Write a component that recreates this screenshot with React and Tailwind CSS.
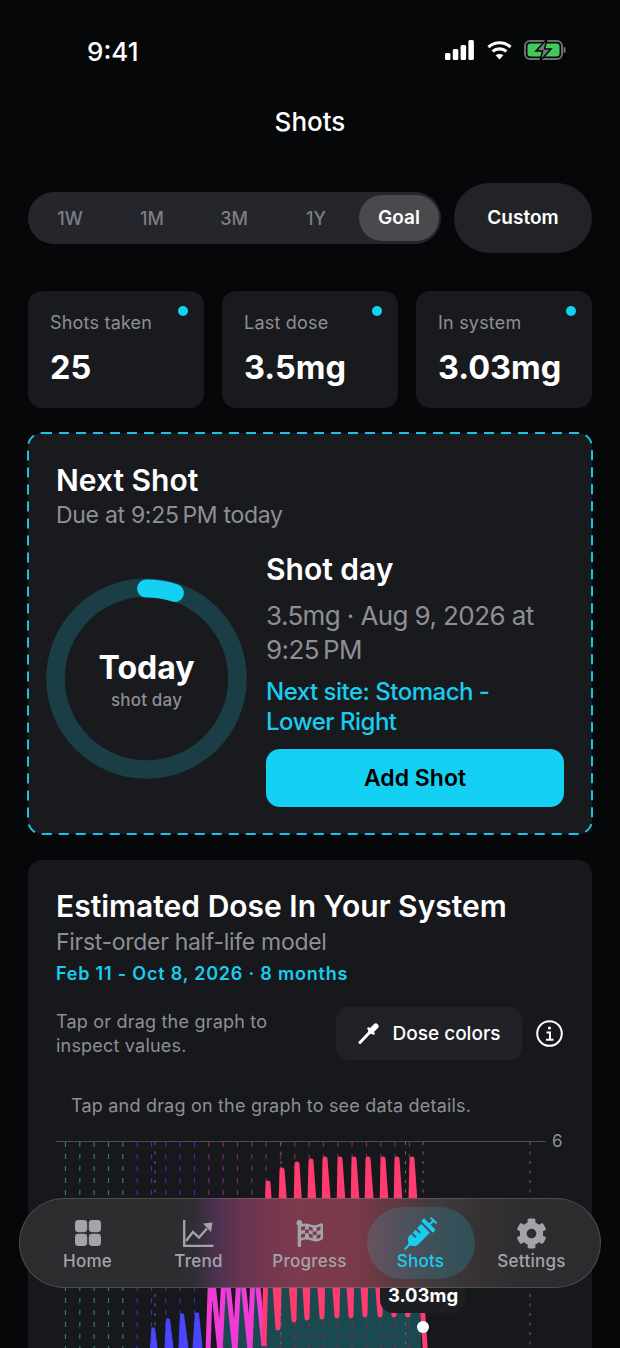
import React from "react";
import { FaSyringe, FaCog, FaFlagCheckered } from "react-icons/fa";

const ranges = ["1W", "1M", "3M", "1Y"];

const stats = [
  { label: "Shots taken", value: "25" },
  { label: "Last dose", value: "3.5mg" },
  { label: "In system", value: "3.03mg" },
];

// dashed guides, one per dose
const guideColor = (i) => {
  if (i < 5) return "#2f7a74";
  if (i < 10) return "#3a2fb0";
  if (i < 15) return "#7a2a78";
  return "#7e2a50";
};
const guides = Array.from({ length: 25 }, (_, i) => 65.5 + i * 14.33);
const monthLines = [155, 281, 405.5, 423, 530];

const blueSpikes = [
  "150.5,1348 152,1328 154.5,1328 157,1348",
  "165,1348 166.5,1319 169.5,1319 173,1348",
  "179,1348 180.5,1314 183.5,1314 188,1348",
  "193,1348 195.5,1313 198.5,1313 202,1348",
];
const magenta = "208,1352 211,1262 220,1352 225,1256 235,1352 240,1252 250,1350 254,1248 264,1346";
const pink =
  "264,1346 268,1183 278,1328 282,1170 294,1320 297,1164 307,1318 311,1161 322,1317 325,1159 337,1316 340,1159 351,1316 354,1159 365,1315 368,1159 380,1315 383,1159 394,1315 397,1159 408,1315 412,1159 426,1360";
const fill = `222,1352 225,1256 235,1352 240,1252 250,1350 254,1248 264,1346 ${pink.replace("264,1346 ", "").replace(" 426,1360", "")} 421,1330 421,1352`;

const DoseChart = () => (
  <svg className="block -mx-[28px] w-[564px] h-[223px]" viewBox="28 1125 564 223">
    <polygon points={fill} fill="#1a4a50" />
    <line x1="56" y1="1141.5" x2="546" y2="1141.5" stroke="#4c4d52" strokeWidth="1" />
    {guides.map((x, i) => (
      <line key={x} x1={x} y1="1142" x2={x} y2="1348" stroke={guideColor(i)} strokeWidth="1.2" strokeDasharray="5 7" />
    ))}
    {monthLines.map((x) => (
      <line key={x} x1={x} y1="1142" x2={x} y2="1348" stroke="#6a6b70" strokeWidth="1" strokeDasharray="3 6.5" />
    ))}
    {blueSpikes.map((p) => (
      <polygon key={p} points={p} fill="#4a45ff" stroke="#4a45ff" strokeWidth="1" strokeLinejoin="round" />
    ))}
    <polyline points={magenta} fill="none" stroke="#f03bd6" strokeWidth="5" strokeLinejoin="round" />
    <polyline points={pink} fill="none" stroke="#ff3b6f" strokeWidth="5" strokeLinejoin="round" />
    <rect x="380" y="1262" width="86" height="51" rx="13" fill="#1d1e22" />
    <text x="423" y="1302" textAnchor="middle" fill="#ffffff" fontSize="18.5" fontWeight="700" fontFamily="Inter, sans-serif">
      3.03mg
    </text>
    <circle cx="423" cy="1327" r="6" fill="#ffffff" />
    <text x="552" y="1147" fill="#8e8f94" fontSize="17" fontFamily="Inter, sans-serif">
      6
    </text>
  </svg>
);

const HomeIcon = () => (
  <svg width="26" height="26" viewBox="0 0 26 26" fill="currentColor">
    <rect x="0" y="0" width="12.2" height="12.2" rx="3.4" />
    <rect x="13.8" y="0" width="12.2" height="12.2" rx="3.4" />
    <rect x="0" y="13.8" width="12.2" height="12.2" rx="3.4" />
    <rect x="13.8" y="13.8" width="12.2" height="12.2" rx="3.4" />
  </svg>
);

const TrendIcon = () => (
  <svg width="31" height="27" viewBox="0 0 31 27" fill="none" stroke="currentColor" strokeWidth="2.3">
    <path d="M1.2 0v25.8H30.5" />
    <path d="M3 21l7-9 6 5.5 8-9" />
    <path d="M20 3.5 29.5 2.5 28 12z" fill="currentColor" stroke="none" />
  </svg>
);

const navItems = [
  { label: "Home", icon: <HomeIcon /> },
  { label: "Trend", icon: <TrendIcon /> },
  { label: "Progress", icon: <FaFlagCheckered size={27} /> },
  { label: "Shots", icon: <FaSyringe size={33} />, active: true },
  { label: "Settings", icon: <FaCog size={31} /> },
];

const App = () => {
  return (
    <div className="relative h-[1348px] w-[620px] overflow-hidden bg-[#060709] text-white font-['Inter',sans-serif]">
      {/* status bar */}
      <div className="h-[100px] pl-[87px] pr-[54px] flex items-center justify-between">
        <span className="pt-[3px] text-[26px] font-medium">9:41</span>
        <div className="flex items-center">
          <svg width="29" height="20" viewBox="0 0 29 20" fill="#fff">
            <rect x="0" y="13" width="5.500" height="7" rx="1.500" />
            <rect x="7.800" y="9" width="5.500" height="11" rx="1.500" />
            <rect x="15.600" y="5" width="5.500" height="15" rx="1.500" />
            <rect x="23.400" y="0" width="5.500" height="20" rx="1.500" />
          </svg>
          <svg className="ml-[13px]" width="25" height="20" viewBox="0 0 26 20" fill="none" stroke="#fff" strokeWidth="3.2">
            <path d="M1.500 7C8 1 18 1 24.500 7" />
            <path d="M5.800 11.500c4-3.600 10.400-3.600 14.400 0" />
            <path d="M13 20l-4-4.500c2.400-1.800 5.600-1.800 8 0z" fill="#fff" stroke="none" />
          </svg>
          <svg className="ml-[12px]" width="42" height="20" viewBox="0 0 42 20">
            <rect x="1" y="1" width="37" height="18" rx="5" fill="none" stroke="#6d6e6e" strokeWidth="2" />
            <rect x="3.500" y="3.500" width="32" height="13" rx="3" fill="#3ecb5c" />
            <rect x="39.500" y="7" width="2" height="6" rx="1" fill="#6d6e6e" />
            <path d="M23 -1 12 11h6.500L16 21 27 9h-6.500z" fill="#77787a" stroke="#060709" strokeWidth="1.500" />
          </svg>
        </div>
      </div>

      <div className="h-[44px] pb-[2px] flex items-center justify-center text-[26px] font-medium">Shots</div>

      {/* range selector */}
      <div className="mt-[39px] h-[70px] px-[28px] flex items-center gap-[13px]">
        <div className="w-[413px] h-[52px] rounded-full bg-[#25262b] flex items-center pl-[1px] pr-[2px]">
          {ranges.map((r) => (
            <div key={r} className="w-[82px] text-center text-[18px] font-medium text-[#7d7e84]">
              {r}
            </div>
          ))}
          <div className="ml-auto w-[80px] h-[46px] pt-[1px] rounded-full bg-[#4a494e] flex items-center justify-center text-[19px] font-semibold">
            Goal
          </div>
        </div>
        <div className="w-[138px] h-[70px] pt-[1px] rounded-[35px] bg-[#222327] flex items-center justify-center text-[19px] font-semibold">
          Custom
        </div>
      </div>

      {/* stats */}
      <div className="mt-[38px] px-[28px] grid grid-cols-3 gap-[18px]">
        {stats.map((s) => (
          <div key={s.label} className="relative h-[117px] rounded-[14px] bg-[#191a1e] pl-[22px] pt-[20px]">
            <span className="absolute right-[16px] top-[15px] w-[10px] h-[10px] rounded-full bg-[#14d1f3]" />
            <div className="text-[18px] leading-[24px] tracking-[0.2px] text-[#8e8f94]">{s.label}</div>
            <div className="mt-[11px] text-[32.500px] leading-[44px] font-bold">{s.value}</div>
          </div>
        ))}
      </div>

      {/* next shot */}
      <div className="relative mt-[25px] mx-[28px] h-[401px] rounded-[14px] bg-[#191a1e] px-[28px] pt-[29px]">
        <svg className="absolute inset-0 w-full h-full overflow-visible" fill="none">
          <rect x="0" y="0" width="564" height="401" rx="14" stroke="#1cc3e0" strokeWidth="2" strokeDasharray="10 7" />
        </svg>
        <div className="text-[30px] leading-[36px] font-semibold">Next Shot</div>
        <div className="mt-[2px] text-[23px] leading-[30px] tracking-[-0.3px] text-[#8e8f94]">Due at 9:25{"\u202f"}PM today</div>
        <div className="mt-[21px] flex">
          <div className="relative -ml-[10px] mt-[27px] w-[201px] h-[201px] shrink-0">
            <svg width="201" height="201" viewBox="0 0 201 201" fill="none">
              <circle cx="100.500" cy="100.500" r="91" stroke="#1b3d46" strokeWidth="18.500" />
              <path d="M100 10.500A90 90 0 0 1 129 15" stroke="#14d1f3" strokeWidth="18" strokeLinecap="round" />
            </svg>
            <div className="absolute inset-0 flex flex-col items-center pt-[70px]">
              <div className="text-[32px] leading-[40px] font-bold">Today</div>
              <div className="mt-[1px] text-[17px] leading-[22px] tracking-[0.2px] text-[#8e8f94] font-medium">shot day</div>
            </div>
          </div>
          <div className="ml-[19px] w-[299px]">
            <div className="text-[30px] leading-[36px] font-semibold">Shot day</div>
            <div className="mt-[12px] text-[26px] leading-[34px] tracking-[-0.6px] text-[#8e8f94]">3.5mg · Aug 9, 2026 at 9:25{"\u202f"}PM</div>
            <div className="mt-[10px] w-[240px] text-[24px] leading-[30px] tracking-[-0.5px] font-medium text-[#18cdf0]">Next site: Stomach - Lower Right</div>
            <button className="mt-[12px] w-full h-[58px] rounded-[14px] bg-[#14d1f3] text-black text-[23px] font-semibold">
              Add Shot
            </button>
          </div>
        </div>
      </div>

      {/* dose chart card */}
      <div className="mt-[26px] mx-[28px] h-[600px] rounded-[14px] bg-[#17181c] px-[28px] pt-[27px]">
        <div className="text-[30px] leading-[38px] font-semibold whitespace-nowrap">Estimated Dose In Your System</div>
        <div className="mt-[2px] text-[23px] leading-[30px] tracking-[-0.3px] text-[#8e8f94]">First-order half-life model</div>
        <div className="mt-[5px] text-[18px] leading-[24px] font-semibold tracking-[0.8px] text-[#18cdf0]">Feb 11 - Oct 8, 2026 · 8 months</div>
        <div className="mt-[21px] flex items-center">
          <div className="w-[270px] text-[18px] leading-[24px] tracking-[0.2px] text-[#8e8f94]">Tap or drag the graph to inspect values.</div>
          <div className="ml-auto w-[186px] h-[53px] rounded-[12px] bg-[#202126] flex items-center justify-center gap-[14px]">
            <svg width="21" height="21" viewBox="0 0 21 21" fill="none" stroke="#fff" strokeLinecap="round">
              <path d="M2 19.500 12.500 8.500" strokeWidth="3" />
              <path d="M10.500 5.500 15.500 10.500" strokeWidth="2.500" />
              <path d="M13 8 17.800 3.200" strokeWidth="5.500" />
            </svg>
            <span className="pt-[1px] text-[19px] font-medium">Dose colors</span>
          </div>
          <svg className="ml-[14px] mr-[1px]" width="27" height="27" viewBox="0 0 27 27" fill="none" stroke="#fff" strokeWidth="2">
            <circle cx="13.500" cy="13.500" r="12.300" />
            <circle cx="13.500" cy="8" r="1.600" fill="#fff" stroke="none" />
            <path d="M10.500 12.500h3.500v7M10 19.800h7.500" />
          </svg>
        </div>
        <div className="mt-[34px] pl-[15px] text-[18px] leading-[24px] tracking-[0.2px] text-[#8e8f94]">Tap and drag on the graph to see data details.</div>
        <div className="mt-[7px]">
          <DoseChart />
        </div>
      </div>

      <nav className="absolute left-[19px] top-[1198px] w-[582px] h-[90px] rounded-[45px] border border-white/15 bg-[linear-gradient(90deg,#2b2c2e_0%,#2c2d2f_26%,#302d34_30%,#4d3150_34%,#653452_38%,#753750_43%,#7c3a4d_48%,#7a3a4a_57%,#703a45_60%,#5a3a40_65%,#3f3a3c_72%,#363233_79%,#2e2d2f_86%,#2b2c2e_100%)] px-[12px] flex items-center">
        {navItems.map((item) => (
          <div key={item.label} className="w-[111px] flex justify-center">
            <div
              className={
                item.active
                  ? "w-[108px] h-[72px] rounded-[36px] bg-[linear-gradient(90deg,#66535f,#3f5058_60%,#2f5058)] flex flex-col items-center text-[#18cdf0]"
                  : "w-[108px] h-[72px] flex flex-col items-center text-[#a3a4a9]"
              }
            >
              <div className="h-[44px] pt-[8px] flex items-center justify-center">{item.icon}</div>
              <div className="text-[17px] leading-[20px] tracking-[0.25px] font-medium">{item.label}</div>
            </div>
          </div>
        ))}
      </nav>
    </div>
  );
};

export default App;
